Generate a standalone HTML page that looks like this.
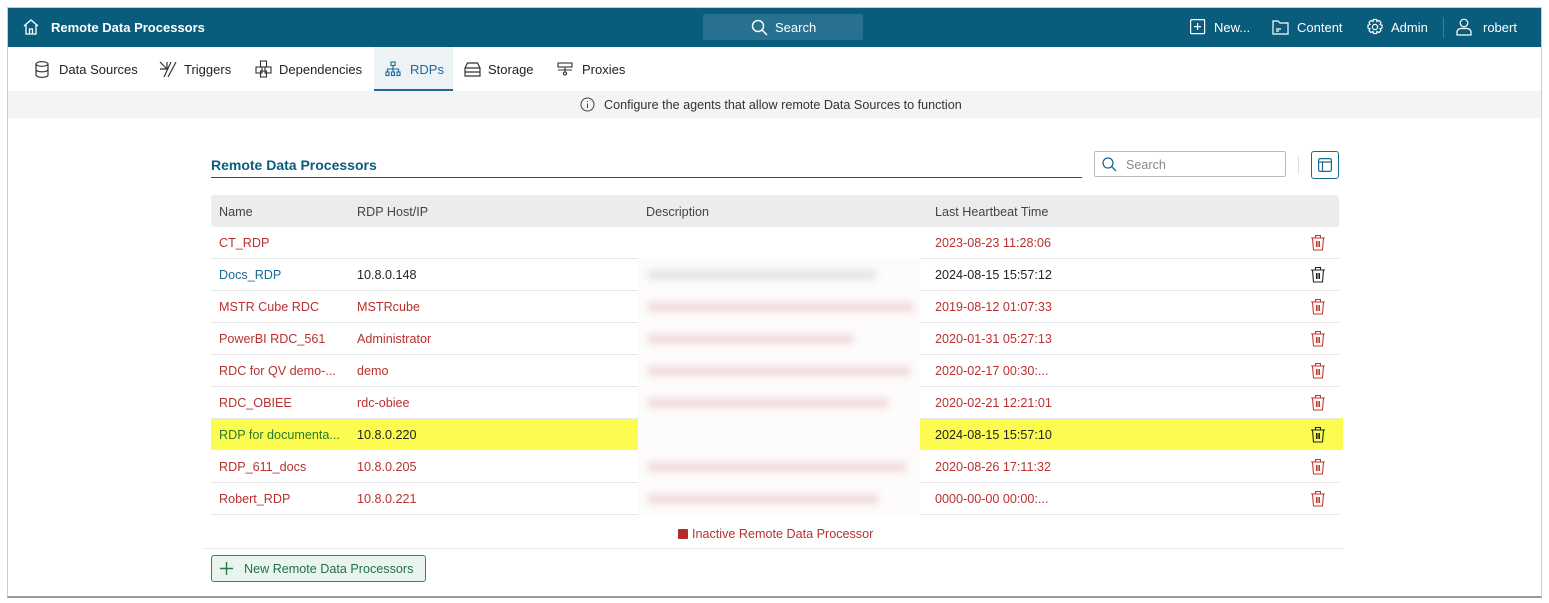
<!DOCTYPE html><html><head><style>
*{margin:0;padding:0;box-sizing:border-box}
body{width:1549px;height:603px;background:#fff;font-family:"Liberation Sans",sans-serif;font-size:12.6px;color:#333;position:relative;overflow:hidden}
.a{position:absolute}
.frame{left:7px;top:7px;width:1535px;height:591px;border:1px solid #ccc;border-bottom:2px solid #999}
.hdr{left:8px;top:8px;width:1533px;height:39px;background:#0a5c7d;color:#fff}
.hdr span{position:absolute;top:12px;font-size:13px}
.tab{top:62px;font-size:13px;color:#222}
.row{left:211px;width:1128px;height:32px;border-bottom:1px solid #e6e6e6}
.c{position:absolute;top:9px;white-space:nowrap}
.r{color:#b9312f}.b{color:#1a6a96}.k{color:#222}
svg{position:absolute}
</style></head><body>
<div class="a frame"></div>
<div class="a hdr">
<svg style="left:15px;top:10px" width="16" height="17" viewBox="0 0 16 17" fill="none" stroke="#fff" stroke-width="1.3"><path d="M1 8L8 2l7 6M3 7v9h10V7M6.5 16v-5h3v5"/></svg>
<span style="left:43px;font-weight:bold">Remote Data Processors</span>
<div class="a" style="left:695px;top:6px;width:160px;height:26px;background:#27708f;border-radius:2px"></div>
<svg style="left:743px;top:11px" width="17" height="17" viewBox="0 0 17 17" fill="none" stroke="#fff" stroke-width="1.5"><circle cx="7" cy="7" r="5.5"/><path d="M11 11l5 5"/></svg>
<span style="left:767px">Search</span>
<svg style="left:1182px;top:11px" width="16" height="16" fill="none" stroke="#fff" stroke-width="1.2"><rect x=".6" y=".6" width="14" height="14" rx="1"/><path d="M7.6 4v7M4 7.6h7"/></svg>
<span style="left:1206px">New...</span>
<svg style="left:1264px;top:11px" width="17" height="16" fill="none" stroke="#fff" stroke-width="1.2"><path d="M1 2h5l2 2h8v11H1z M4 10h5M4 12h3"/></svg>
<span style="left:1289px">Content</span>
<svg style="left:1358px;top:10px" width="18" height="18" fill="none" stroke="#fff" stroke-width="1.2"><circle cx="9" cy="9" r="2.6"/><path d="M7.5 1.5h3l.5 2 2-1 2 2-1 2 2 .5v3l-2 .5 1 2-2 2-2-1-.5 2h-3l-.5-2-2 1-2-2 1-2-2-.5v-3l2-.5-1-2 2-2 2 1z"/></svg>
<span style="left:1383px">Admin</span>
<div class="a" style="left:1435px;top:9px;width:1px;height:21px;background:#3a7e99"></div>
<svg style="left:1448px;top:10px" width="16" height="18" fill="none" stroke="#fff" stroke-width="1.2"><circle cx="8" cy="5" r="3.8"/><path d="M1 17v-3c0-2 2-3.5 4-3.5h6c2 0 4 1.5 4 3.5v3z"/></svg>
<span style="left:1475px">robert</span>
</div>
<div class="a" style="left:374px;top:47px;width:79px;height:44px;background:#edf2f5;border-bottom:2px solid #1a6a96"></div>
<svg style="left:35px;top:61px" width="14" height="17" fill="none" stroke="#333" stroke-width="1.2"><ellipse cx="7" cy="3" rx="6" ry="2.3"/><path d="M1 3v11c0 1.3 2.7 2.3 6 2.3s6-1 6-2.3V3M1 8.5c0 1.3 2.7 2.3 6 2.3s6-1 6-2.3"/></svg>
<span class="a tab" style="left:59px">Data Sources</span>
<svg style="left:159px;top:61px" width="18" height="17" fill="none" stroke="#333" stroke-width="1.2"><path d="M1 1l7 7M1 8h7V1M17 1L9 16M12 1l-7 15"/></svg>
<span class="a tab" style="left:184px">Triggers</span>
<svg style="left:255px;top:60px" width="17" height="18" fill="none" stroke="#333" stroke-width="1.1"><rect x="5.5" y="1" width="6" height="6"/><rect x="1" y="7" width="6" height="6"/><rect x="10" y="7" width="6" height="6"/><rect x="5.5" y="11" width="6" height="6"/></svg>
<span class="a tab" style="left:279px">Dependencies</span>
<svg style="left:385px;top:61px" width="16" height="16" fill="none" stroke="#1a6a96" stroke-width="1.1"><rect x="6" y="1" width="4" height="3.5"/><path d="M8 4.5V8M2.5 11V8h11v3M8 8v3"/><rect x="1" y="11" width="3" height="3.5"/><rect x="6.5" y="11" width="3" height="3.5"/><rect x="12" y="11" width="3" height="3.5"/></svg>
<span class="a tab" style="left:410px;color:#1a6a96">RDPs</span>
<svg style="left:464px;top:62px" width="17" height="15" fill="none" stroke="#333" stroke-width="1.2"><path d="M1 6l2.5-5h10L16 6v8H1zM1 6h15M1 10h15"/></svg>
<span class="a tab" style="left:488px">Storage</span>
<svg style="left:557px;top:62px" width="16" height="14" fill="none" stroke="#333" stroke-width="1.1"><rect x="1" y="1" width="14" height="4"/><path d="M8 5v3M1 8h14M8 8v2"/><circle cx="8" cy="11.5" r="1.5"/></svg>
<span class="a tab" style="left:582px">Proxies</span>
<div class="a" style="left:8px;top:91px;width:1533px;height:27px;background:#f4f4f4"></div>
<svg style="left:580px;top:97px" width="15" height="15" fill="none" stroke="#444" stroke-width="1"><circle cx="7.5" cy="7.5" r="6.5"/><path d="M7.5 6.5v4.5M7.5 4v1"/></svg>
<span class="a" style="left:604px;top:98px;color:#333">Configure the agents that allow remote Data Sources to function</span>
<span class="a" style="left:211px;top:157px;font-size:14px;font-weight:bold;color:#0a5c7d">Remote Data Processors</span>
<div class="a" style="left:211px;top:177px;width:871px;height:1px;background:#0a5c7d"></div>
<div class="a" style="left:1094px;top:151px;width:192px;height:26px;border:1px solid #bbb;border-radius:2px"></div>
<svg style="left:1102px;top:157px" width="15" height="15" fill="none" stroke="#1a6a96" stroke-width="1.3"><circle cx="6" cy="6" r="5"/><path d="M9.5 9.5l4.5 4.5"/></svg>
<span class="a" style="left:1126px;top:158px;color:#888">Search</span>
<div class="a" style="left:1298px;top:156px;width:1px;height:18px;background:#ddd"></div>
<div class="a" style="left:1311px;top:151px;width:28px;height:28px;border:1px solid #1a6a96;border-radius:3px"></div>
<svg style="left:1318px;top:158px" width="14" height="14" fill="none" stroke="#1a6a96" stroke-width="1.2"><rect x=".6" y=".6" width="12.8" height="12.8" rx="1.5"/><path d="M1 4h12M4.5 4v9.4"/></svg>
<div class="a" style="left:211px;top:195px;width:1128px;height:32px;background:#ececec;border-radius:3px"></div>
<span class="a" style="left:219px;top:205px;color:#444">Name</span>
<span class="a" style="left:357px;top:205px;color:#444">RDP Host/IP</span>
<span class="a" style="left:646px;top:205px;color:#444">Description</span>
<span class="a" style="left:935px;top:205px;color:#444">Last Heartbeat Time</span>
<div class="a" style="left:211px;top:418px;width:430px;height:32px;background:#fbfb50"></div>
<div class="a" style="left:918px;top:418px;width:425px;height:32px;background:#fbfb50"></div>
<div class="a row" style="top:227px"><span class="c r" style="left:8px">CT_RDP</span><span class="c r" style="left:724px">2023-08-23 11:28:06</span></div>
<div class="a row" style="top:259px"><span class="c b" style="left:8px">Docs_RDP</span><span class="c k" style="left:146px">10.8.0.148</span><span class="c k" style="left:724px">2024-08-15 15:57:12</span></div>
<div class="a row" style="top:291px"><span class="c r" style="left:8px">MSTR Cube RDC</span><span class="c r" style="left:146px">MSTRcube</span><span class="c r" style="left:724px">2019-08-12 01:07:33</span></div>
<div class="a row" style="top:323px"><span class="c r" style="left:8px">PowerBI RDC_561</span><span class="c r" style="left:146px">Administrator</span><span class="c r" style="left:724px">2020-01-31 05:27:13</span></div>
<div class="a row" style="top:355px"><span class="c r" style="left:8px">RDC for QV demo-...</span><span class="c r" style="left:146px">demo</span><span class="c r" style="left:724px">2020-02-17 00:30:...</span></div>
<div class="a row" style="top:387px"><span class="c r" style="left:8px">RDC_OBIEE</span><span class="c r" style="left:146px">rdc-obiee</span><span class="c r" style="left:724px">2020-02-21 12:21:01</span></div>
<div class="a row" style="top:419px;border:none"><span class="c" style="left:8px;color:#2a7a2a">RDP for documenta...</span><span class="c k" style="left:146px">10.8.0.220</span><span class="c k" style="left:724px">2024-08-15 15:57:10</span></div>
<div class="a row" style="top:451px"><span class="c r" style="left:8px">RDP_611_docs</span><span class="c r" style="left:146px">10.8.0.205</span><span class="c r" style="left:724px">2020-08-26 17:11:32</span></div>
<div class="a row" style="top:483px"><span class="c r" style="left:8px">Robert_RDP</span><span class="c r" style="left:146px">10.8.0.221</span><span class="c r" style="left:724px">0000-00-00 00:00:...</span></div>
<div class="a" style="left:638px;top:258px;width:282px;height:258px;background:#fdfbfb"></div>
<div class="a" style="left:648px;top:271px;width:228px;height:8px;background:#e0e0e0;filter:blur(4px)"></div>
<div class="a" style="left:648px;top:303px;width:265px;height:8px;background:#f0d4d4;filter:blur(4px)"></div>
<div class="a" style="left:648px;top:335px;width:205px;height:8px;background:#f0d4d4;filter:blur(4px)"></div>
<div class="a" style="left:648px;top:367px;width:262px;height:8px;background:#f0d4d4;filter:blur(4px)"></div>
<div class="a" style="left:648px;top:399px;width:240px;height:8px;background:#f0d4d4;filter:blur(4px)"></div>
<div class="a" style="left:648px;top:463px;width:258px;height:8px;background:#f0d4d4;filter:blur(4px)"></div>
<div class="a" style="left:648px;top:495px;width:230px;height:8px;background:#f0d4d4;filter:blur(4px)"></div>
<svg width="0" height="0"><defs><g id="t"><path d="M1 4h14M5.5 4V1.5h5V4M2.5 4l1 12h9l1-12"/><path d="M6.5 7v6M8 7v6M9.5 7v6"/></g></defs></svg>
<svg style="left:1310px;top:234px" width="16" height="17" fill="none" stroke="#c0392b" stroke-width="1.1"><use href="#t"/></svg>
<svg style="left:1310px;top:266px" width="16" height="17" fill="none" stroke="#222" stroke-width="1.1"><use href="#t"/></svg>
<svg style="left:1310px;top:298px" width="16" height="17" fill="none" stroke="#c0392b" stroke-width="1.1"><use href="#t"/></svg>
<svg style="left:1310px;top:330px" width="16" height="17" fill="none" stroke="#c0392b" stroke-width="1.1"><use href="#t"/></svg>
<svg style="left:1310px;top:362px" width="16" height="17" fill="none" stroke="#c0392b" stroke-width="1.1"><use href="#t"/></svg>
<svg style="left:1310px;top:394px" width="16" height="17" fill="none" stroke="#c0392b" stroke-width="1.1"><use href="#t"/></svg>
<svg style="left:1310px;top:426px" width="16" height="17" fill="none" stroke="#222" stroke-width="1.1"><use href="#t"/></svg>
<svg style="left:1310px;top:458px" width="16" height="17" fill="none" stroke="#c0392b" stroke-width="1.1"><use href="#t"/></svg>
<svg style="left:1310px;top:490px" width="16" height="17" fill="none" stroke="#c0392b" stroke-width="1.1"><use href="#t"/></svg>
<div class="a" style="left:678px;top:529px;width:10px;height:10px;background:#b22a2a;border-radius:1px"></div>
<span class="a" style="left:692px;top:527px;color:#b9312f">Inactive Remote Data Processor</span>
<div class="a" style="left:203px;top:548px;width:1140px;height:1px;background:#e6e6e6"></div>
<div class="a" style="left:211px;top:555px;width:215px;height:27px;background:#eaf4ee;border:1px solid #2e8b57;border-radius:3px"></div>
<svg style="left:220px;top:562px" width="13" height="13" stroke="#2a7a4a" stroke-width="1.4"><path d="M6.5 0v13M0 6.5h13"/></svg>
<span class="a" style="left:244px;top:562px;color:#23704a">New Remote Data Processors</span>
</body></html>
